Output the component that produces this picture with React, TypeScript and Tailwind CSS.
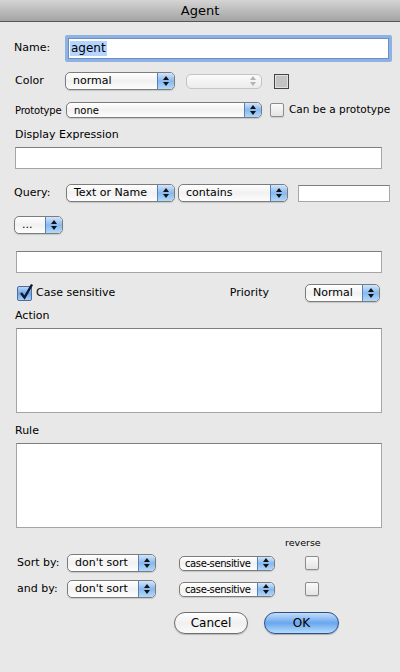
import React from 'react';

const font = { fontFamily: '"DejaVu Sans", "Liberation Sans", sans-serif' };

const Stepper: React.FC<{ disabled?: boolean }> = ({ disabled }) => (
  <div
    className={
      disabled
        ? 'flex h-full w-[16px] flex-col items-center justify-center gap-[2px] rounded-r-[5px]'
        : 'flex h-full w-[17px] flex-col items-center justify-center gap-[2px] rounded-r-[4px] border-l border-[#5a7fb5] bg-gradient-to-b from-[#d2e6fa] via-[#86b8ee] to-[#b3d8fb]'
    }
  >
    <svg width="6" height="4" viewBox="0 0 6 4">
      <path d="M3 0 L6 4 L0 4 Z" fill={disabled ? '#b4b4b4' : '#111'} />
    </svg>
    <svg width="6" height="4" viewBox="0 0 6 4">
      <path d="M0 0 L6 0 L3 4 Z" fill={disabled ? '#b4b4b4' : '#111'} />
    </svg>
  </div>
);

const PopUp: React.FC<{
  label?: string;
  w: string;
  h: string;
  text?: string;
  disabled?: boolean;
}> = ({ label = '', w, h, text = 'text-[11px] pl-[7px]', disabled }) => (
  <div
    className={`${w} ${h} flex shrink-0 items-stretch overflow-hidden rounded-[5px] border ${
      disabled ? 'border-[#c4c4c4] bg-gradient-to-b from-[#fafafa] to-[#ececec]' : 'border-[#7c7c7c] bg-gradient-to-b from-[#ffffff] via-[#f1f1f1] to-[#fdfdfd] shadow-[0_1px_1px_rgba(0,0,0,0.15)]'
    }`}
  >
    <div className={`flex flex-1 items-center overflow-hidden whitespace-nowrap ${text} text-black`}>{label}</div>
    <Stepper disabled={disabled} />
  </div>
);

const TextField: React.FC<{ w: string; h: string; cls?: string }> = ({ w, h, cls = '' }) => (
  <div className={`${w} ${h} ${cls} shrink-0 border border-[#a5a5a5] border-t-[#7e7e7e] bg-white`} />
);

const CheckBox: React.FC<{ checked?: boolean; cls?: string }> = ({ checked, cls = '' }) =>
  checked ? (
    <div className={`relative h-[15px] w-[15px] shrink-0 rounded-[2px] border border-[#4c6c9c] bg-gradient-to-b from-[#b9d7f7] via-[#6ea6e8] to-[#a8d0f8] ${cls}`}>
      <svg className="absolute left-[1px] top-[-4px]" width="15" height="17" viewBox="0 0 15 17">
        <path d="M2 10 L5.5 14.5 L13 1.5" stroke="#0b1a33" strokeWidth="2.4" fill="none" strokeLinejoin="miter" />
      </svg>
    </div>
  ) : (
    <div className={`h-[14px] w-[14px] shrink-0 rounded-[2px] border border-[#8c8c8c] bg-gradient-to-b from-[#fafafa] to-[#e4e4e4] shadow-[0_1px_1px_rgba(0,0,0,0.12)] ${cls}`} />
  );

export default function App() {
  return (
    <div className="h-[672px] w-[400px] overflow-hidden whitespace-nowrap bg-[#e8e8e8] text-black" style={font}>
      {/* Title bar */}
      <div className="flex h-[22px] items-center justify-center border-b border-[#555] bg-gradient-to-b from-[#d4d4d4] to-[#a4a4a4] text-[13px]">
        Agent
      </div>

      {/* Name */}
      <div className="mt-[13px] flex h-[27px] items-center">
        <span className="ml-[14px] w-[51px] text-[11px]">Name:</span>
        <div className="flex h-[27px] w-[327px] items-center rounded-[2px] border-[3px] border-[#8db2e3] bg-white">
          <div className="flex h-full w-full items-center border border-[#6b8fc4] pl-[1px] text-[12px]">
            <span className="bg-[#b5d5ff] px-[1px] leading-[15px]">agent</span>
          </div>
        </div>
      </div>

      {/* Color */}
      <div className="mt-[10px] flex h-[18px] items-center">
        <span className="ml-[15px] w-[50px] text-[11px]">Color</span>
        <PopUp label="normal" w="w-[110px]" h="h-[18px]" />
        <div className="ml-[11px]">
          <PopUp w="w-[76px]" h="h-[15px]" disabled />
        </div>
        <div className="ml-[12px] h-[15px] w-[15px] border border-[#444] bg-[#c3c3c3] shadow-[inset_0_0_0_1px_#e0e0e0]" />
      </div>

      {/* Prototype */}
      <div className="mt-[12px] flex h-[16px] items-center">
        <span className="ml-[15px] w-[51px] tracking-[-0.2px] text-[10px]">Prototype</span>
        <PopUp label="none" w="w-[196px]" h="h-[16px]" text="text-[10px] pl-[7px]" />
        <CheckBox cls="ml-[8px]" />
        <span className="ml-[5px] text-[10.5px]">Can be a prototype</span>
      </div>

      {/* Display Expression */}
      <div className="mt-[9px] flex h-[16px] items-center">
        <span className="ml-[15px] text-[11px]">Display Expression</span>
      </div>
      <TextField w="w-[367px]" h="h-[22px]" cls="ml-[15px] mt-[4px]" />

      {/* Query */}
      <div className="mt-[15px] flex h-[18px] items-center">
        <span className="ml-[14px] w-[52px] text-[11px]">Query:</span>
        <PopUp label="Text or Name" w="w-[109px]" h="h-[18px]" />
        <div className="ml-[3px]">
          <PopUp label="contains" w="w-[110px]" h="h-[18px]" />
        </div>
        <TextField w="w-[92px]" h="h-[17px]" cls="ml-[10px]" />
      </div>

      {/* ... */}
      <div className="mt-[14px] flex h-[18px] items-center pl-[14px]">
        <PopUp label="..." w="w-[49px]" h="h-[18px]" />
      </div>

      <TextField w="w-[366px]" h="h-[22px]" cls="ml-[16px] mt-[17px]" />

      {/* Case sensitive / Priority */}
      <div className="mt-[11px] flex h-[18px] items-center">
        <CheckBox checked cls="ml-[17px]" />
        <span className="ml-[4px] text-[11px]">Case sensitive</span>
        <span className="ml-auto text-[11px]">Priority</span>
        <div className="ml-[36px] mr-[20px]">
          <PopUp label="Normal" w="w-[75px]" h="h-[18px]" />
        </div>
      </div>

      {/* Action */}
      <div className="mt-[6px] flex h-[16px] items-center">
        <span className="ml-[15px] text-[11px]">Action</span>
      </div>
      <TextField w="w-[366px]" h="h-[85px]" cls="ml-[16px] mt-[4px]" />

      {/* Rule */}
      <div className="mt-[10px] flex h-[16px] items-center">
        <span className="ml-[15px] text-[11px]">Rule</span>
      </div>
      <TextField w="w-[366px]" h="h-[85px]" cls="ml-[16px] mt-[4px]" />

      {/* reverse */}
      <div className="mt-[8px] flex h-[14px] items-center">
        <span className="ml-[285px] text-[9.5px]">reverse</span>
      </div>

      {/* Sort by */}
      {['Sort by:', 'and by:'].map((l, i) => (
        <div key={l} className={`${i === 0 ? 'mt-[4px]' : 'mt-[8px]'} flex h-[18px] items-center`}>
          <span className="ml-[17px] w-[50px] text-[11px]">{l}</span>
          <PopUp label="don't sort" w="w-[89px]" h="h-[18px]" />
          <div className="ml-[23px]">
            <PopUp label="case-sensitive" w="w-[96px]" h="h-[15px]" text="text-[10px] tracking-[-0.4px] pl-[5px]" />
          </div>
          <CheckBox cls="ml-[30px]" />
        </div>
      ))}

      {/* Buttons */}
      <div className="mt-[14px] flex h-[22px] items-center">
        <div className="ml-[174px] flex h-[22px] w-[74px] items-center justify-center rounded-full border border-[#6e6e6e] bg-gradient-to-b from-[#ffffff] via-[#f0f0f0] to-[#fafafa] text-[12px] shadow-[0_1px_1px_rgba(0,0,0,0.2)]">
          Cancel
        </div>
        <div className="ml-[16px] flex h-[22px] w-[75px] items-center justify-center rounded-full border border-[#2d4f8a] bg-gradient-to-b from-[#c4ddf8] via-[#69a6ee] to-[#b5dcfd] text-[12px] shadow-[0_1px_1px_rgba(0,0,0,0.25)]">
          OK
        </div>
      </div>
    </div>
  );
}
